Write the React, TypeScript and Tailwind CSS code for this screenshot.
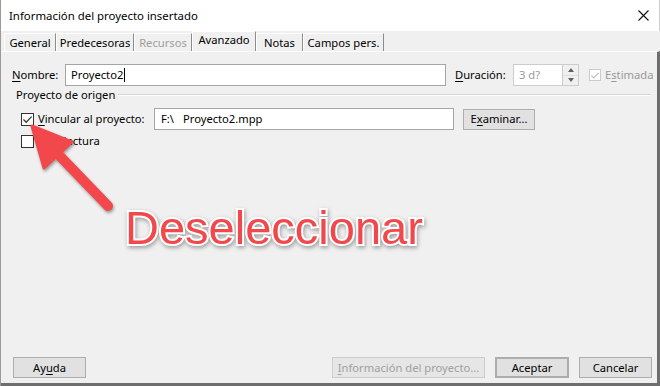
import React from 'react';

const U = ({ children }: { children: React.ReactNode }) => (
  <span className="underline decoration-1 underline-offset-[2px]">{children}</span>
);

const CheckBox = ({ checked, disabled }: { checked?: boolean; disabled?: boolean }) => (
  <span
    className={
      disabled
        ? 'w-[12px] h-[12px] border border-[#cccccc] bg-white flex items-center justify-center shrink-0'
        : 'w-[13px] h-[13px] border border-[#333333] bg-white flex items-center justify-center shrink-0'
    }
  >
    {checked && (
      <svg width="11" height="11" viewBox="0 0 11 11">
        <path
          d="M1.5 5.5 L4.2 8.2 L9.6 2.6"
          fill="none"
          stroke={disabled ? '#c4c4c4' : '#3a3a3a'}
          strokeWidth="1.3"
        />
      </svg>
    )}
  </span>
);

const Btn = ({
  children,
  w,
  primary,
  disabled,
}: {
  children: React.ReactNode;
  w: string;
  primary?: boolean;
  disabled?: boolean;
}) => (
  <div
    className={`${w} h-[21px] flex items-center justify-center whitespace-nowrap ${
      primary ? 'border-2 border-[#0078d7]' : 'border'
    } ${disabled ? 'text-[#a0a0a0] bg-[#e6e6e6] border-[#cccccc]' : 'text-black bg-[#e1e1e1] border-[#adadad]'}`}
  >
    {children}
  </div>
);

const tabs = [
  { label: 'General', w: 'w-[52px]' },
  { label: 'Predecesoras', w: 'w-[78px]' },
  { label: 'Recursos', w: 'w-[58px]', disabled: true },
  { label: 'Avanzado', w: 'w-[64px]', active: true },
  { label: 'Notas', w: 'w-[47px]' },
  { label: 'Campos pers.', w: 'w-[81px]' },
];

export default function App() {
  return (
    <div className="w-[660px] h-[386px] relative overflow-hidden bg-[#f0f0f0] border-l border-[#9a9a9a] flex flex-col text-[11.2px] leading-none text-black font-['Noto_Sans',sans-serif]">
      {/* title bar */}
      <div className="h-[31px] bg-white flex items-center justify-between pl-[8px] pr-[10px] border-r border-[#cfcfcf] shrink-0">
        <span className="text-[11.4px]">Información del proyecto insertado</span>
        <svg width="11" height="11" viewBox="0 0 11 11">
          <path d="M0.5 0.5 L10.5 10.5 M10.5 0.5 L0.5 10.5" stroke="#111" strokeWidth="1.1" />
        </svg>
      </div>

      {/* tabs */}
      <div className="h-[20px] flex items-end pl-[3px] shrink-0">
        {tabs.map((t) => (
          <div
            key={t.label}
            className={`${t.w} flex items-center justify-center whitespace-nowrap border-l border-t border-white border-r border-r-[#8c8c8c] ${
              t.active ? 'h-[20px] pb-[3px]' : 'h-[18px] pt-[1px]'
            } ${t.disabled ? 'text-[#9d9d9d]' : 'text-black'}`}
          >
            {t.label}
          </div>
        ))}
      </div>

      {/* panel */}
      <div className="flex-1 flex flex-col border-t border-white border-r-[3px] border-r-[#6e6e6e] border-b-[3px] border-b-[#6e6e6e]">
        {/* nombre row */}
        <div className="flex items-center h-[22px] mt-[12px] pl-[11px] whitespace-nowrap">
          <span className="w-[53px]">
            <U>N</U>ombre:
          </span>
          <div className="w-[381px] h-[22px] bg-white border border-[#a5a5a5] flex items-center pl-[5px]">
            Proyecto2<span className="w-px h-[14px] bg-black ml-px" />
          </div>
          <span className="ml-[9px] w-[58px]">
            <U>D</U>uración:
          </span>
          <div className="w-[50px] h-[22px] bg-white border border-[#cccccc] flex items-center pl-[5px] text-[#9a9a9a]">
            3 d?
          </div>
          <div className="w-[16px] h-[22px] border border-[#cccccc] border-l-0 flex flex-col">
            <div className="flex-1 flex items-center justify-center border-b border-[#dddddd]">
              <span className="w-0 h-0 border-l-[3px] border-r-[3px] border-b-[4px] border-l-transparent border-r-transparent border-b-[#606060]" />
            </div>
            <div className="flex-1 flex items-center justify-center">
              <span className="w-0 h-0 border-l-[3px] border-r-[3px] border-t-[4px] border-l-transparent border-r-transparent border-t-[#606060]" />
            </div>
          </div>
          <span className="ml-[10px]">
            <CheckBox checked disabled />
          </span>
          <span className="ml-[4px] text-[#9a9a9a]">
            E<U>s</U>timada
          </span>
        </div>

        {/* group label */}
        <div className="flex items-center mt-[1px] h-[16px] pl-[15px] pr-[6px]">
          <span>Proyecto de origen</span>
          <div className="flex-1 ml-[3px] border-t border-[#d5d5d5] border-b border-b-white" />
        </div>

        {/* vincular row */}
        <div className="flex items-center h-[22px] mt-[5px] pl-[20px] whitespace-nowrap">
          <CheckBox checked />
          <span className="ml-[4px] w-[116px]">
            <U>V</U>incular al proyecto:
          </span>
          <div className="w-[300px] h-[22px] bg-white border border-[#a5a5a5] flex items-center pl-[6px]">
            F:\<span className="ml-[9px]">Proyecto2.mpp</span>
          </div>
          <div className="ml-[9px]">
            <Btn w="w-[72px]">
              E<U>x</U>aminar...
            </Btn>
          </div>
        </div>

        {/* solo lectura */}
        <div className="flex items-center h-[14px] mt-[4px] pl-[20px]">
          <CheckBox />
          <span className="ml-[4px]">
            Solo <U>l</U>ectura
          </span>
        </div>

        {/* buttons */}
        <div className="mt-auto mb-[5px] flex items-center pl-[12px]">
          <Btn w="w-[73px]">
            Ay<U>u</U>da
          </Btn>
          <div className="ml-[246px]">
            <Btn w="w-[153px]" disabled>
              <span>
                <U>I</U>nformación del proyecto...
              </span>
            </Btn>
          </div>
          <div className="ml-[10px]">
            <Btn w="w-[74px]" primary>
              Aceptar
            </Btn>
          </div>
          <div className="ml-[10px]">
            <Btn w="w-[73px]">Cancelar</Btn>
          </div>
        </div>
      </div>

      {/* annotation arrow */}
      <svg
        className="absolute left-0 top-[100px] drop-shadow-[1px_2px_1.5px_rgba(0,0,0,0.35)]"
        width="140"
        height="130"
        viewBox="0 100 140 130"
      >
        <line x1="55" y1="152" x2="107" y2="206" stroke="#f2474b" strokeWidth="10" strokeLinecap="round" />
        <path d="M31 126 L43 168 L71 142 Z" fill="#f2474b" stroke="#f2474b" strokeWidth="3" strokeLinejoin="round" />
      </svg>

      {/* annotation text */}
      <span className="absolute left-[124px] top-[204px] text-[47px] leading-none text-[#f2474b] font-['Liberation_Sans',Arial,sans-serif] [-webkit-text-stroke:4px_white] [paint-order:stroke_fill] drop-shadow-[1px_2px_2px_rgba(0,0,0,0.35)]">
        Deseleccionar
      </span>
    </div>
  );
}
